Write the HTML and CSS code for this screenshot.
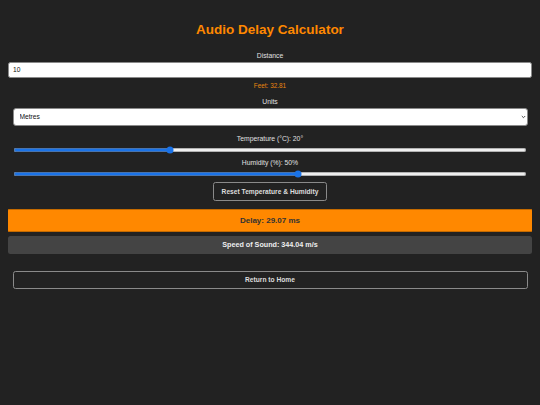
FILE: index.html
```html
<!DOCTYPE html>
<html lang="en">
<head>
<meta charset="utf-8">
<title>Audio Delay Calculator</title>
<link rel="stylesheet" href="styles.css">
</head>
<body>
<main class="app">
  <h1 class="title">Audio Delay Calculator</h1>

  <label class="label" for="distance">Distance</label>
  <input class="text-input" id="distance" type="number" value="10">
  <p class="feet">Feet: 32.81</p>

  <label class="label label-units" for="units">Units</label>
  <div class="select-wrap">
    <select class="select" id="units">
      <option>Metres</option>
      <option>Feet</option>
    </select>
    <svg class="select-arrow" width="5" height="4" viewBox="0 0 5 4" aria-hidden="true">
      <path d="M0.8 1 L2.5 2.7 L4.2 1" fill="none" stroke="#3a3a3a" stroke-width="0.9"/>
    </svg>
  </div>

  <label class="label label-temp" for="temp">Temperature (°C): 20°</label>
  <div class="slider-wrap">
    <input class="range" id="temp" type="range" min="0" max="66" value="20">
  </div>

  <label class="label label-hum" for="hum">Humidity (%): 50%</label>
  <div class="slider-wrap">
    <input class="range" id="hum" type="range" min="0" max="90" value="50">
  </div>

  <div class="reset-row">
    <button class="btn-reset" type="button">Reset Temperature &amp; Humidity</button>
  </div>

  <div class="delay">Delay: 29.07 ms</div>
  <div class="speed">Speed of Sound: 344.04 m/s</div>

  <button class="btn-home" type="button">Return to Home</button>
</main>
</body>
</html>
```

FILE: styles.css
```css
html {
  background: #222222;
}

body {
  margin: 8px;
  background: #222222;
  color: #dddddd;
  font-family: "Liberation Sans", Arial, sans-serif;
}

.app {
  display: flex;
  flex-direction: column;
}

.title {
  margin: 13.5px 0 15px;
  text-align: center;
  font-size: 13.5px;
  line-height: 15.5px;
  font-weight: bold;
  color: #ff8800;
}

.label {
  display: block;
  text-align: center;
  font-size: 6.8px;
  line-height: 8px;
  color: #e0e0e0;
  margin-bottom: 1.5px;
}

.label-units {
  margin-top: 9px;
  margin-bottom: 2px;
}

.label-temp {
  margin-top: 9.5px;
  margin-bottom: 3px;
}

.label-hum {
  margin-top: 5px;
  margin-bottom: 3px;
}

.text-input {
  box-sizing: border-box;
  width: 100%;
  height: 16.5px;
  margin: 0;
  padding: 0 4px;
  border: 1px solid #8a8a8a;
  border-radius: 2.5px;
  background: #ffffff;
  color: #111111;
  font-family: "Liberation Sans", Arial, sans-serif;
  font-size: 6.67px;
}

.feet {
  margin: 3.5px 0 0;
  text-align: center;
  font-size: 6.4px;
  line-height: 7.5px;
  color: #e8850f;
}

.select-wrap {
  position: relative;
  display: flex;
  margin: 0 4.5px;
}

.select {
  display: block;
  box-sizing: border-box;
  width: 100%;
  height: 17.5px;
  margin: 0;
  padding: 0 6px;
  border: 1px solid #8a8a8a;
  border-radius: 3px;
  background: #ffffff;
  color: #111111;
  font-family: "Liberation Sans", Arial, sans-serif;
  font-size: 6.67px;
  appearance: none;
  -webkit-appearance: none;
}

.select-arrow {
  position: absolute;
  right: 1.5px;
  top: 6.5px;
  pointer-events: none;
}

.slider-wrap {
  display: flex;
  height: 8px;
  padding: 0 5px;
}

.range {
  zoom: 0.5;
  flex: 1;
  height: 16px;
  margin: 0;
  accent-color: #1a73e8;
}

.reset-row {
  display: flex;
  justify-content: center;
  margin-top: 4px;
}

.btn-reset {
  height: 19px;
  padding: 0 8px;
  border: 1px solid #8a8a8a;
  border-radius: 2.5px;
  background: #222222;
  color: #dddddd;
  font-family: "Liberation Sans", Arial, sans-serif;
  font-size: 6.67px;
  font-weight: bold;
}

.delay {
  display: flex;
  align-items: center;
  justify-content: center;
  box-sizing: border-box;
  height: 22.5px;
  margin: 8px -2px 0;
  border: 1px solid #c46a00;
  border-radius: 3px;
  background: #ff8800;
  color: #333333;
  font-size: 8px;
  font-weight: bold;
}

.speed {
  display: flex;
  align-items: center;
  justify-content: center;
  height: 18px;
  margin: 4px 0 0;
  border-radius: 2.5px;
  background: #444444;
  color: #eeeeee;
  font-size: 7.2px;
  font-weight: bold;
}

.btn-home {
  box-sizing: border-box;
  width: calc(100% - 9px);
  height: 18px;
  margin: 17px 4.5px 0;
  border: 1px solid #8a8a8a;
  border-radius: 2.5px;
  background: #222222;
  color: #dddddd;
  font-family: "Liberation Sans", Arial, sans-serif;
  font-size: 6.67px;
  font-weight: bold;
}
```
